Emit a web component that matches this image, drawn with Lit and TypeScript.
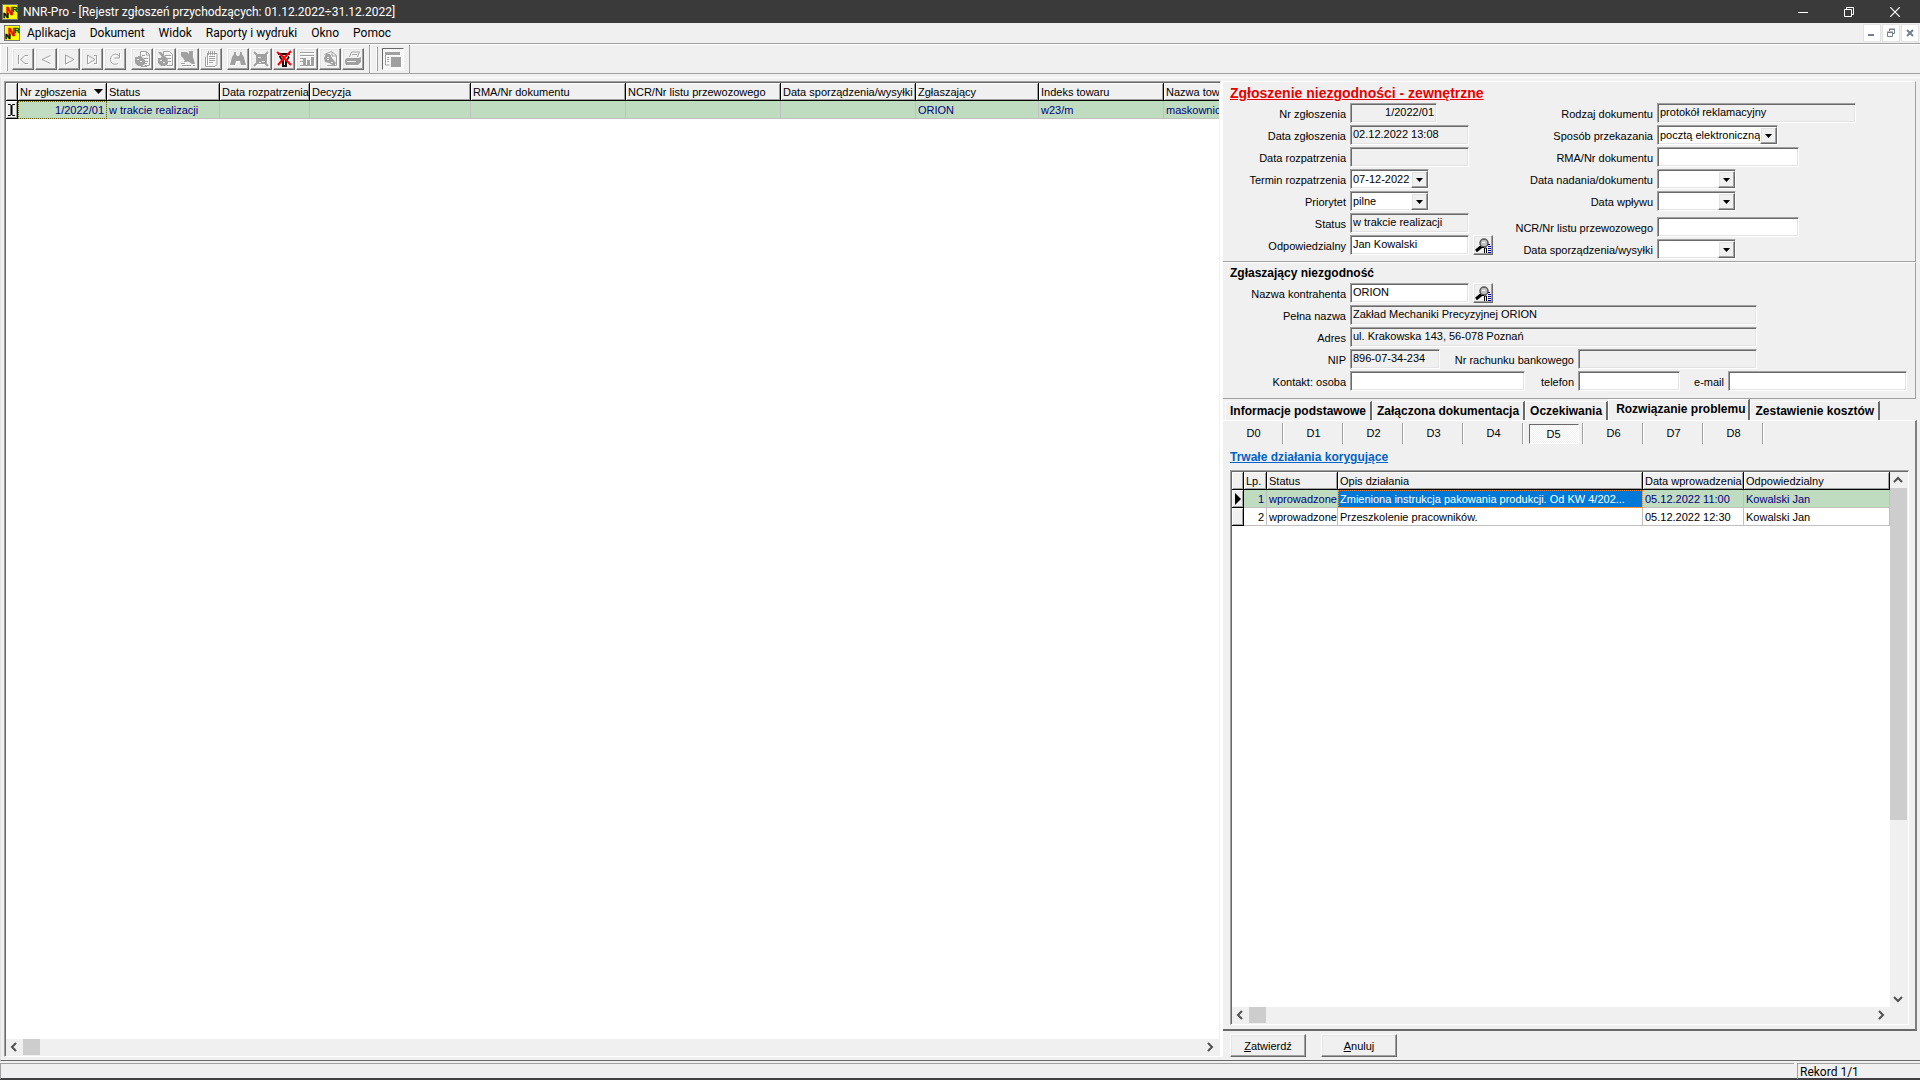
import { LitElement, html, css, svg, nothing, type TemplateResult, type SVGTemplateResult } from "lit";
import { customElement, property } from "lit/decorators.js";
import { classMap } from "lit/directives/class-map.js";

/* Shared look: classic bevels, fields and buttons. */
const base = css`
  *, *::before, *::after { box-sizing: border-box; }
  button, input, select { font: inherit; color: inherit; margin: 0; border-radius: 0; }
  button { padding: 0; }
  svg { display: block; }
  .field {
    height: 20px;
    padding: 0 2px 2px;
    border: 1px solid;
    border-color: #a0a0a0 #fff #fff #a0a0a0;
    box-shadow: inset 1px 1px #696969, inset -1px -1px #e3e3e3;
    background: #fff;
    outline: none;
    min-width: 0;
  }
  input.field:read-only { background: #f0f0f0; }
  .raised {
    border: 1px solid;
    border-color: #fff #696969 #696969 #fff;
    box-shadow: inset -1px -1px #a0a0a0, inset 1px 1px #e3e3e3;
    background: #f0f0f0;
  }
`;

/* ---------- toolbar icons, drawn on an 18px grid ---------- */
const icons: Record<string, SVGTemplateResult> = {
  first: svg`<path fill="none" stroke="currentColor" d="M4.500 5v9M14 5.500h-3L6.500 9.500l4.500 4h3"/>`,
  prev: svg`<path fill="none" stroke="currentColor" d="M13.500 5.500L5 9.500l8.500 4"/>`,
  next: svg`<path fill="none" stroke="currentColor" d="M5.500 5v9L14 9.500L5.500 5"/>`,
  last: svg`<path fill="none" stroke="currentColor" d="M4.500 5v9L12 9.500L4.500 5M13.500 5v9M11 5.500h3M11 13.500h3"/>`,
  refresh: svg`<path fill="none" stroke="currentColor" d="M13.500 6.500C11 2.500 4.500 4 4.500 9.500c0 4 4 6 7.500 4M13.500 3v5h-5"/>`,
  add: svg`
    <path fill="none" stroke="currentColor" d="M7.500 7V1.500h6l3 3v11h-5M13.500 2v3h3M9 5.500h3M11 8.500h4M12 11.500h3"/>
    <path fill="currentColor" d="M2 7h3V6h3l4 4v4l-3 2H5l-3-3z"/><path stroke="currentColor" d="M8 16.500h6M10 13.500h4"/>
    <path stroke="#f0f0f0" d="M4 9.500h2M7 11.500h2"/>`,
  edit: svg`
    <path fill="none" stroke="currentColor" d="M7.500 5V1.500h6l3 3v11h-6M10 8.500h5M12 11.500h3M9 5.500h6"/>
    <path fill="currentColor" d="M2 2l3 0 7 7-1 2-2 0zM2 8h3V7h3l4 4v3l-3 2H5l-3-3z"/>
    <path stroke="#f0f0f0" d="M4 10.500h2M7 12.500h2"/>`,
  remove: svg`
    <path fill="currentColor" d="M2 2h6l2 2V1h4v6l1 3 1 4-3 0-3-2-4-1-2-3-2-2z"/>
    <path stroke="currentColor" d="M2 13.500h4M3 15.500h9M14 15.500h2M5 11.500h3"/>`,
  notes: svg`
    <path fill="none" stroke="currentColor" d="M5.500 3v12M5 3.500h10v11l-2 2H3.500v-10M7 6.500h6M7 8.500h6M7 10.500h6M7 12.500h4M6.500 1v4M8.500 1v4M10.500 1v4M12.500 1v4"/>`,
  find: svg`<path fill="currentColor" d="M5 2h2v2l1 2h2l1-2V2h2v2l2 3 2 8h-5l-1-4H7l-1 4H1l2-8 2-3z"/>`,
  filter: svg`
    <path fill="currentColor" d="M4 4h11v10H4z"/>
    <path stroke="currentColor" stroke-width="2" d="M2 2l14 14M2 16L16 2"/>
    <path stroke="#f0f0f0" d="M6 7.500h3M10 11.500h3M7 12.500h2"/>`,
  unfilter: svg`
    <path fill="none" stroke="#111" stroke-width="2" d="M3 4h12"/>
    <path fill="none" stroke="#111" stroke-dasharray="2 1" d="M4 6.500h10"/>
    <path fill="none" stroke="#111" stroke-width="2" d="M5 7l3 4v5h3v-5l3-4"/>
    <path fill="none" stroke="#f00" stroke-width="2" d="M2 2l5 4 9 9M16 1l-6 6-7 8"/>`,
  report: svg`
    <path fill="none" stroke="currentColor" d="M2 2.500h14M2 5.500h14M2 15.500h14M2 8.500h3M2 11.500h3"/>
    <path fill="currentColor" d="M5 8h3v8H5zM9 10h3v6H9zM13 7h3v9h-3z"/>`,
  preview: svg`
    <path fill="none" stroke="currentColor" d="M3.500 4.500l7-3 5 4v10h-9M11 2v4h4"/>
    <path fill="currentColor" d="M5 4h4l2 4 4 5-2 3-5-3-4-1-1-4z"/>
    <path stroke="#f0f0f0" d="M6 7.500h2M6 9.500h2M10 12.500h2"/>`,
  print: svg`
    <path fill="none" stroke="currentColor" d="M5.500 7l2-5h8l-2 5M8 4.500h5"/>
    <path fill="currentColor" d="M3 8h12l2-1v5l-3 3H2l-1-2v-3z"/>
    <path stroke="#f0f0f0" d="M3 11.500h9"/>`,
  panes: svg`
    <path fill="currentColor" d="M1 2h15v3H1zM7 7h10v10H7z"/>
    <path fill="none" stroke="currentColor" d="M1.500 2v13h4M3 7.500h2M3 9.500h2M3 11.500h2"/>`,
};

@customElement("tool-button")
export class ToolButton extends LitElement {
  @property() icon = "";
  @property() label = "";
  @property({ type: Boolean }) pressed = false;
  static styles = [base, css`
    :host { display: block; }
    button { width: 22px; height: 22px; display: grid; place-items: center; color: #a0a0a0; }
    svg { width: 18px; height: 18px; }
    .soft svg { filter: drop-shadow(1px 1px 0 #fff); }
    .pressed {
      border: 1px solid;
      border-color: #696969 #fff #fff #696969;
      box-shadow: none;
      background: repeating-conic-gradient(#fff 0 25%, #f0f0f0 0 50%) 0 0 / 2px 2px;
    }
  `];
  render() {
    return html`<button
      class=${classMap({ raised: !this.pressed, pressed: this.pressed, soft: this.icon !== "unfilter" })}
      aria-label=${this.label}><svg viewBox="0 0 18 18">${icons[this.icon]}</svg></button>`;
  }
}

@customElement("app-logo")
export class AppLogo extends LitElement {
  static styles = css`
    :host { display: block; width: 16px; height: 16px; }
    svg { display: block; }
    text { font: bold 8px "Liberation Sans", sans-serif; }
    .tall { font-size: 10px; }
  `;
  render() {
    return html`<svg width="16" height="16" viewBox="0 0 16 16" aria-hidden="true">
      <rect x=".5" y=".5" width="15" height="15" fill="#ff0" stroke="#777"/>
      <text class="tall" x="4" y="11" fill="#e00" stroke="#e00" stroke-width=".600">N</text>
      <text x="1" y="14" fill="#000" stroke="#000" stroke-width=".400">N</text>
      <text x="10" y="8" fill="#052" stroke="#052" stroke-width=".400">R</text>
    </svg>`;
  }
}

const chevrons: Record<string, string> = {
  left: "M10 4L6 8l4 4",
  right: "M6 4l4 4-4 4",
  up: "M4 10l4-4 4 4",
  down: "M4 6l4 4 4-4",
};

@customElement("scroll-bar")
export class ScrollBar extends LitElement {
  @property({ reflect: true }) direction: "horizontal" | "vertical" = "horizontal";
  @property({ type: Boolean, reflect: true }) long = false;
  static styles = [base, css`
    :host { display: flex; background: #f0f0f0; min-width: 0; min-height: 0; }
    :host([direction="vertical"]) { flex-direction: column; width: 17px; }
    :host([direction="horizontal"]) { height: 16px; }
    button { flex: none; width: 17px; height: 16px; border: 0; background: none; }
    .track { flex: 1; min-width: 0; min-height: 0; }
    .thumb { background: #cdcdcd; width: 17px; height: 100%; }
    :host([long]) .thumb { height: 66%; }
    path { fill: none; stroke: #505050; stroke-width: 2; }
  `];
  private arrow(dir: string, label: string) {
    return html`<button aria-label=${label}><svg width="16" height="16" viewBox="0 0 16 16"><path d=${chevrons[dir]}/></svg></button>`;
  }
  render() {
    const v = this.direction === "vertical";
    return html`${this.arrow(v ? "up" : "left", "Wstecz")}
      <div class="track"><div class="thumb"></div></div>
      ${this.arrow(v ? "down" : "right", "Dalej")}`;
  }
}

interface Column { title: string; width: number; align?: "right"; sorted?: boolean; }

/* Data grid with a marker column; the first row is the current one. */
@customElement("data-grid")
export class DataGrid extends LitElement {
  @property({ attribute: false }) columns: Column[] = [];
  @property({ attribute: false }) rows: string[][] = [];
  @property({ type: Number }) focusColumn = 0;
  @property() marker: "edit" | "arrow" = "arrow";
  @property({ type: Boolean, reflect: true }) filled = false;
  static styles = [base, css`
    :host { display: block; overflow: hidden; background: #fff; min-width: 0; min-height: 0; }
    table { table-layout: fixed; border-collapse: separate; border-spacing: 0; width: 0; }
    :host([filled]) table { width: 100%; }
    th, td { padding: 0 2px; height: 18px; line-height: 16px; white-space: nowrap; overflow: hidden; }
    th {
      font-weight: normal;
      text-align: left;
      background: #f0f0f0;
      border-right: 1px solid #000;
      border-bottom: 1px solid #000;
      box-shadow: inset 1px 1px #fff, inset -1px -1px #a0a0a0;
    }
    td { border-right: 1px solid #c0c0c0; border-bottom: 1px solid #c0c0c0; }
    thead th { padding: 0 0 0 2px; }
    tbody th { padding: 0; }
    .head { display: flex; align-items: center; justify-content: space-between; }
    .head svg { margin-right: 2px; }
    .right { text-align: right; }
    .current td { background: #c0dcc0; color: #000080; }
    .current .focus { outline: 1px dotted #606000; outline-offset: -1px; }
    .current .focus.invert { background: #0078d7; color: #fff; outline-color: #ff8728; }
  `];
  private markerIcon() {
    return this.marker === "arrow"
      ? html`<svg width="11" height="14" viewBox="0 0 11 14"><path d="M3 1l6 6-6 6z"/></svg>`
      : html`<svg width="11" height="14" viewBox="0 0 11 14"><path fill="none" stroke="#000" d="M2 1.500h2.500l1 1 1-1H9M2 12.500h2.500l1-1 1 1H9"/><path stroke="#000" stroke-width="2" d="M5.500 2v10"/></svg>`;
  }
  render() {
    return html`<table>
      <colgroup>
        <col style="width:12px">
        ${this.columns.map((c) => html`<col style=${c.width ? `width:${c.width}px` : ""}>`)}
      </colgroup>
      <thead><tr><th></th>${this.columns.map((c) => html`<th scope="col"><div class="head">${c.title}${c.sorted
        ? html`<svg width="11" height="6" viewBox="0 0 11 6"><path d="M1 0h9L5.500 5z"/></svg>` : nothing}</div></th>`)}</tr></thead>
      <tbody>${this.rows.map((row, r) => html`<tr class=${classMap({ current: r === 0 })}>
        <th>${r === 0 ? this.markerIcon() : nothing}</th>
        ${row.map((cell, i) => html`<td class=${classMap({
          right: this.columns[i].align === "right",
          focus: i === this.focusColumn,
          invert: this.marker === "arrow",
        })}>${cell}</td>`)}
      </tr>`)}</tbody>
    </table>`;
  }
}

const registerColumns: Column[] = [
  { title: "Nr zgłoszenia", width: 89, align: "right", sorted: true },
  { title: "Status", width: 113 },
  { title: "Data rozpatrzenia", width: 90 },
  { title: "Decyzja", width: 161 },
  { title: "RMA/Nr dokumentu", width: 155 },
  { title: "NCR/Nr listu przewozowego", width: 155 },
  { title: "Data sporządzenia/wysyłki", width: 135 },
  { title: "Zgłaszający", width: 123 },
  { title: "Indeks towaru", width: 125 },
  { title: "Nazwa towaru", width: 125 },
];
const registerRows = [["1/2022/01", "w trakcie realizacji", "", "", "", "", "", "ORION", "w23/m", "maskownica"]];

const actionColumns: Column[] = [
  { title: "Lp.", width: 23, align: "right" },
  { title: "Status", width: 71 },
  { title: "Opis działania", width: 305 },
  { title: "Data wprowadzenia", width: 101 },
  { title: "Odpowiedzialny", width: 0 },
];
const actionRows = [
  ["1", "wprowadzone", "Zmieniona instrukcja pakowania produkcji. Od KW 4/202...", "05.12.2022 11:00", "Kowalski Jan"],
  ["2", "wprowadzone", "Przeszkolenie pracowników.", "05.12.2022 12:30", "Kowalski Jan"],
];

const toolGroups = [
  [["first", "Pierwszy"], ["prev", "Poprzedni"], ["next", "Następny"], ["last", "Ostatni"], ["refresh", "Odśwież"]],
  [["add", "Dodaj"], ["edit", "Edytuj"], ["remove", "Usuń"], ["notes", "Notatki"]],
  [["find", "Szukaj"], ["filter", "Filtr"], ["unfilter", "Usuń filtr"], ["report", "Raport"], ["preview", "Podgląd"], ["print", "Drukuj"]],
];

@customElement("app-root")
export class AppRoot extends LitElement {
  static styles = [base, css`
    :host {
      display: flex;
      flex-direction: column;
      height: 100vh;
      background: #f0f0f0;
      color: #000;
      font: 11px/14px "Liberation Sans", Arial, sans-serif;
      overflow: hidden;
    }
    .titlebar, .menubar, .statusbar { font: 12px/16px Roboto, "Segoe UI", sans-serif; }
    .titlebar { display: flex; align-items: center; height: 23px; padding-left: 2px; gap: 5px; background: #3a3a3a; color: #fff; flex: none; }
    .window-buttons { display: flex; margin-left: auto; padding-right: 2px; }
    .window-buttons button { width: 46px; height: 23px; border: 0; background: none; display: grid; place-items: center; }
    .menubar { display: flex; align-items: center; height: 21px; padding-left: 4px; border-bottom: 1px solid #a0a0a0; flex: none; }
    .menu { display: flex; gap: 14px; padding-left: 7px; }
    .menu button { border: 0; background: none; }
    .mdi { display: flex; gap: 1px; margin-left: auto; padding-right: 1px; }
    .mdi button { width: 18px; height: 18px; background: #fff; border: 1px solid #e3e3e3; display: grid; place-items: center; }

    .toolbar { display: flex; height: 30px; border-top: 1px solid #fff; border-bottom: 1px solid #a0a0a0; flex: none; }
    .band { display: flex; align-items: center; padding: 0 5px; border-right: 1px solid #a0a0a0; border-left: 1px solid #fff; }
    .grip { width: 2px; height: 24px; background: #a0a0a0; border-left: 1px solid #fff; margin-right: 4px; }
    .group { display: flex; gap: 1px; margin-right: 5px; }
    .group:last-child { margin-right: 0; }

    .main { flex: 1; display: flex; min-height: 0; margin-top: 3px; padding: 3px 2px 3px 3px; border: solid; border-width: 1px 0 1px 1px; border-color: #fff #696969 #696969 #e3e3e3; }
    .frame { display: flex; flex-direction: column; border: 1px solid; border-color: #a0a0a0 #fff #fff #a0a0a0; box-shadow: inset 1px 1px #696969; padding: 1px; min-height: 0; min-width: 0; }
    .register { flex: 1; }
    .register data-grid { flex: 1; }
    .register scroll-bar { flex: none; }

    .side { width: 697px; flex: none; display: flex; flex-direction: column; border-left: 2px solid #fff; min-height: 0; }
    .section { flex: none; border: solid; border-width: 1px 1px 1px 0; border-color: #fff #a0a0a0 #a0a0a0 #fff; margin-right: 2px; }
    h1, h2, h3 { margin: 0; }
    h1 { font-size: 14px; line-height: 22px; color: #e80000; text-decoration: underline; padding-left: 7px; height: 21px; }
    .cols { display: flex; padding-bottom: 2px; }
    .form { display: grid; grid-template-columns: 123px auto; column-gap: 4px; row-gap: 2px; grid-auto-rows: 20px; align-items: end; justify-content: start; width: 277px; }
    .form.second { grid-template-columns: 153px auto; grid-template-rows: repeat(5, 20px) 24px 20px; width: auto; }
    label { text-align: right; line-height: 18px; white-space: nowrap; }
    .line { display: flex; align-items: end; gap: 4px; }
    .lookup { width: 20px; height: 20px; flex: none; }
    .w79 { width: 79px; }
    .w87 { width: 87px; text-align: right; }
    .w90 { width: 90px; }
    .w102 { width: 102px; }
    .w119 { width: 119px; }
    .w121 { width: 121px; }
    .w142 { width: 142px; }
    .w175 { width: 175px; }
    .w179 { width: 179px; }
    .w199 { width: 199px; }
    .w407 { width: 407px; }
    .line label.inner { width: 130px; }
    .line label.phone { width: 45px; }
    .line label.mail { width: 40px; }
    .combo { display: grid; grid-template-columns: 1fr 17px; height: 20px; padding: 0; }
    .combo select { grid-area: 1 / 1 / 2 / 3; appearance: none; border: 0; padding: 0 16px 0 2px; background: none; outline: none; min-width: 0; }
    .combo .drop { grid-area: 1 / 2; width: 17px; height: 17px; margin-top: 1px; pointer-events: none; display: grid; place-items: center; }
    h2 { font-size: 12px; line-height: 16px; padding: 2px 0 2px 7px; }
    .contact { padding-bottom: 7px; }
    .contact .form { width: auto; }

    .tabs { display: flex; align-items: flex-end; height: 21px; flex: none; padding-left: 2px; }
    .tabs button { height: 19px; padding: 0 4px; border: solid; border-width: 1px 2px 0 1px; border-color: #fff #696969 #fff #fff; background: #f0f0f0; font-weight: bold; font-size: 12px; }
    .tabs .active { height: 21px; padding: 0 3px 3px 7px; }
    .page { flex: 1; display: flex; flex-direction: column; min-height: 0; border: solid; border-width: 1px 2px 2px 0; border-color: #fff #808080 #696969 #fff; padding: 2px 6px 4px 7px; margin-right: 1px; }
    .steps { display: flex; margin-left: -7px; height: 21px; flex: none; }
    .steps span { width: 60px; border-right: 1px solid #a0a0a0; display: grid; place-items: center; box-shadow: 1px 0 #fff; padding-left: 2px; }
    .steps button { width: 50px; height: 20px; border: 0; background: none; padding-bottom: 2px; }
    .steps .active { border: solid 1px; border-color: #696969 #fff #fff #696969; background: repeating-conic-gradient(#fff 0 25%, #f0f0f0 0 50%) 0 0 / 2px 2px; padding: 0; }
    h3 { font-size: 12px; line-height: 16px; margin: 5px 0; }
    h3 a { color: #0063c8; text-decoration: underline; }
    .actions { flex: 1; }
    .scroller { flex: 1; display: flex; min-height: 0; }
    .scroller data-grid { flex: 1; }
    .hrow { display: flex; padding-right: 17px; background: #f0f0f0; flex: none; }
    .hrow scroll-bar { flex: 1; }
    .buttons { display: flex; gap: 15px; padding: 3px 0 0 7px; height: 26px; flex: none; }
    .buttons button { width: 76px; height: 23px; }
    .statusbar { display: flex; gap: 3px; height: 19px; padding-top: 2px; flex: none; border-bottom: 2px solid #404045; }
    .statusbar div { border: 1px solid #a0a0a0; border-width: 1px 0 0 1px; height: 16px; padding-left: 2px; line-height: 16px; }
    .statusbar .wide { flex: 1; }
    .statusbar .count { width: 123px; }
  `];

  private text(id: string, cls: string, value = "", readonly = false) {
    return html`<input class="field ${cls}" id=${id} .value=${value} ?readonly=${readonly}>`;
  }
  private combo(id: string, cls: string, value = "") {
    return html`<span class="field combo ${cls}"><select id=${id}><option>${value}</option></select>
      <span class="drop raised"><svg width="7" height="4" viewBox="0 0 7 4"><path d="M0 0h7L3.500 4z"/></svg></span></span>`;
  }
  private row(id: string, label: string, control: TemplateResult) {
    return html`<label for=${id}>${label}</label>${control}`;
  }
  private lookup(label: string) {
    return html`<button class="lookup raised" aria-label=${label}><svg width="18" height="18" viewBox="0 0 18 18">
      <path stroke="#000" stroke-width="3" d="M2 15l6-5"/>
      <circle cx="10" cy="7" r="4" fill="#c0c0c0" stroke="#555" stroke-width="1.500"/>
      <path stroke="#fff" d="M8 6.500h3"/>
      <path fill="none" stroke="#000" d="M10.500 17v-5h2v5M7 11.500h3"/>
      <path stroke="#0000a0" d="M14 8.500h2M14 10.500h3M14 12.500h3M14 14.500h3M14 16.500h3"/>
    </svg></button>`;
  }

  render() {
    return html`
      <header class="titlebar">
        <app-logo></app-logo><span>NNR-Pro - [Rejestr zgłoszeń przychodzących: 01.12.2022÷31.12.2022]</span>
        <div class="window-buttons">
          <button aria-label="Minimalizuj"><svg width="10" height="10"><path stroke="#fff" d="M0 5.500h10"/></svg></button>
          <button aria-label="Przywróć"><svg width="10" height="10"><path fill="none" stroke="#fff" d="M.5 2.500h7v7h-7zM2.500 2V.5h7v7H8"/></svg></button>
          <button aria-label="Zamknij"><svg width="10" height="10"><path stroke="#fff" stroke-width="1.200" d="M0 0l10 10M10 0L0 10"/></svg></button>
        </div>
      </header>
      <nav class="menubar">
        <app-logo></app-logo>
        <div class="menu">${["Aplikacja", "Dokument", "Widok", "Raporty i wydruki", "Okno", "Pomoc"].map((m) => html`<button>${m}</button>`)}</div>
        <div class="mdi">
          <button aria-label="Minimalizuj okno"><svg width="10" height="10"><path stroke="#708090" stroke-width="2" d="M1 7h6"/></svg></button>
          <button aria-label="Przywróć okno"><svg width="10" height="10"><path fill="none" stroke="#708090" stroke-width="1" d="M1.500 4.500h5v4h-5zM1 4h6M3.500 3V1.500h5v4H7M3 1h6"/></svg></button>
          <button aria-label="Zamknij okno"><svg width="10" height="10"><path stroke="#708090" stroke-width="2" d="M2 2l6 6M8 2L2 8"/></svg></button>
        </div>
      </nav>
      <div class="toolbar">
        <div class="band"><span class="grip"></span>
          ${toolGroups.map((g) => html`<div class="group">${g.map(([i, l]) => html`<tool-button icon=${i} label=${l}></tool-button>`)}</div>`)}
        </div>
        <div class="band"><span class="grip"></span><tool-button icon="panes" label="Panel szczegółów" pressed></tool-button></div>
      </div>
      <main class="main">
        <div class="frame register">
          <data-grid marker="edit" .columns=${registerColumns} .rows=${registerRows}></data-grid>
          <scroll-bar></scroll-bar>
        </div>
        <div class="side">
          <section class="section">
            <h1>Zgłoszenie niezgodności - zewnętrzne</h1>
            <div class="cols">
              <div class="form">
                ${this.row("nr", "Nr zgłoszenia", this.text("nr", "w87", "1/2022/01", true))}
                ${this.row("dz", "Data zgłoszenia", this.text("dz", "w119", "02.12.2022 13:08", true))}
                ${this.row("dr", "Data rozpatrzenia", this.text("dr", "w119", "", true))}
                ${this.row("tr", "Termin rozpatrzenia", this.combo("tr", "w79", "07-12-2022"))}
                ${this.row("pr", "Priorytet", this.combo("pr", "w79", "pilne"))}
                ${this.row("st", "Status", this.text("st", "w119", "w trakcie realizacji", true))}
                ${this.row("od", "Odpowiedzialny", html`<div class="line">${this.text("od", "w119", "Jan Kowalski")}${this.lookup("Wybierz osobę")}</div>`)}
              </div>
              <div class="form second">
                ${this.row("rd", "Rodzaj dokumentu", this.text("rd", "w199", "protokół reklamacyjny", true))}
                ${this.row("sp", "Sposób przekazania", this.combo("sp", "w121", "pocztą elektroniczną"))}
                ${this.row("rma", "RMA/Nr dokumentu", this.text("rma", "w142"))}
                ${this.row("dn", "Data nadania/dokumentu", this.combo("dn", "w79"))}
                ${this.row("dw", "Data wpływu", this.combo("dw", "w79"))}
                ${this.row("ncr", "NCR/Nr listu przewozowego", this.text("ncr", "w142"))}
                ${this.row("ds", "Data sporządzenia/wysyłki", this.combo("ds", "w79"))}
              </div>
            </div>
          </section>
          <section class="section contact">
            <h2>Zgłaszający niezgodność</h2>
            <div class="form">
              ${this.row("nk", "Nazwa kontrahenta", html`<div class="line">${this.text("nk", "w119", "ORION")}${this.lookup("Wybierz kontrahenta")}</div>`)}
              ${this.row("pn", "Pełna nazwa", this.text("pn", "w407", "Zakład Mechaniki Precyzyjnej ORION", true))}
              ${this.row("ad", "Adres", this.text("ad", "w407", "ul. Krakowska 143, 56-078 Poznań", true))}
              ${this.row("nip", "NIP", html`<div class="line">${this.text("nip", "w90", "896-07-34-234", true)}
                <label class="inner" for="rb">Nr rachunku bankowego</label>${this.text("rb", "w179", "", true)}</div>`)}
              ${this.row("ko", "Kontakt: osoba", html`<div class="line">${this.text("ko", "w175")}
                <label class="phone" for="tel">telefon</label>${this.text("tel", "w102")}
                <label class="mail" for="em">e-mail</label>${this.text("em", "w179")}</div>`)}
            </div>
          </section>
          <div class="tabs" role="tablist">
            ${["Informacje podstawowe", "Załączona dokumentacja", "Oczekiwania", "Rozwiązanie problemu", "Zestawienie kosztów"].map(
              (t, i) => html`<button role="tab" class=${classMap({ active: i === 3 })}>${t}</button>`)}
          </div>
          <div class="page">
            <div class="steps">${[0, 1, 2, 3, 4, 5, 6, 7, 8].map((n) => html`<span><button class=${classMap({ active: n === 5 })}>D${n}</button></span>`)}</div>
            <h3><a href="#">Trwałe działania korygujące</a></h3>
            <div class="frame actions">
              <div class="scroller">
                <data-grid filled .columns=${actionColumns} .rows=${actionRows} .focusColumn=${2}></data-grid>
                <scroll-bar direction="vertical" long></scroll-bar>
              </div>
              <div class="hrow"><scroll-bar></scroll-bar></div>
            </div>
          </div>
          <div class="buttons">
            <button class="raised"><u>Z</u>atwierdź</button>
            <button class="raised"><u>A</u>nuluj</button>
          </div>
        </div>
      </main>
      <footer class="statusbar"><div class="wide"></div><div class="count">Rekord 1/1</div></footer>
    `;
  }
}
